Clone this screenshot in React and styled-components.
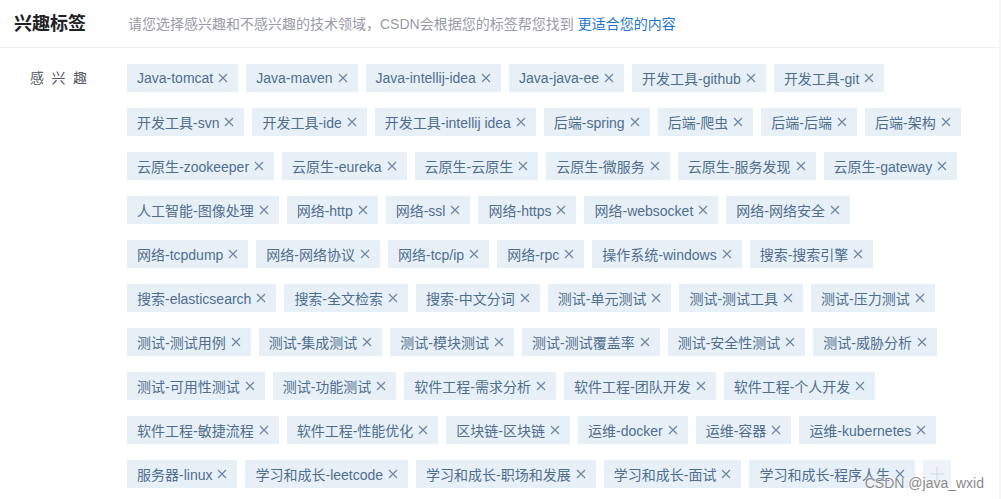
import React from "react";
import styled, { createGlobalStyle } from "styled-components";

const rows = [
  ["Java-tomcat", "Java-maven", "Java-intellij-idea", "Java-java-ee", "开发工具-github", "开发工具-git"],
  ["开发工具-svn", "开发工具-ide", "开发工具-intellij idea", "后端-spring", "后端-爬虫", "后端-后端", "后端-架构"],
  ["云原生-zookeeper", "云原生-eureka", "云原生-云原生", "云原生-微服务", "云原生-服务发现", "云原生-gateway"],
  ["人工智能-图像处理", "网络-http", "网络-ssl", "网络-https", "网络-websocket", "网络-网络安全"],
  ["网络-tcpdump", "网络-网络协议", "网络-tcp/ip", "网络-rpc", "操作系统-windows", "搜索-搜索引擎"],
  ["搜索-elasticsearch", "搜索-全文检索", "搜索-中文分词", "测试-单元测试", "测试-测试工具", "测试-压力测试"],
  ["测试-测试用例", "测试-集成测试", "测试-模块测试", "测试-测试覆盖率", "测试-安全性测试", "测试-威胁分析"],
  ["测试-可用性测试", "测试-功能测试", "软件工程-需求分析", "软件工程-团队开发", "软件工程-个人开发"],
  ["软件工程-敏捷流程", "软件工程-性能优化", "区块链-区块链", "运维-docker", "运维-容器", "运维-kubernetes"],
  ["服务器-linux", "学习和成长-leetcode", "学习和成长-职场和发展", "学习和成长-面试", "学习和成长-程序人生"],
];

const GlobalStyle = createGlobalStyle`
  html, body {
    margin: 0;
    padding: 0;
    background: #f5f6f7;
    font-family: "Liberation Sans", "Noto Sans CJK SC", sans-serif;
  }
`;

const Card = styled.div`
  width: 999px;
  height: 499px;
  background: #fff;
  overflow: hidden;
  position: relative;
`;

const Header = styled.div`
  display: flex;
  align-items: center;
  border-bottom: 1px solid #eeeeee;
  padding-left: 14px;
  box-sizing: border-box;
  height: 48px;
`;

const Title = styled.h3`
  margin: 0;
  width: 114px;
  font-size: 18px;
  font-weight: bold;
  color: #222226;
  line-height: 24px;
`;

const Desc = styled.p`
  margin: 0;
  font-size: 14px;
  color: #999aaa;
  line-height: 20px;
`;

const Link = styled.a`
  color: #1f76d0;
  text-decoration: none;
  margin-left: 4px;
`;

const Body = styled.div`
  display: flex;
  padding-top: 16px;
`;

const Label = styled.div`
  width: 127px;
  padding-left: 30px;
  box-sizing: border-box;
  font-size: 14px;
  line-height: 28px;
  color: #555666;
  letter-spacing: 7.5px;
  flex-shrink: 0;
`;

const Tags = styled.div`
  display: flex;
  flex-direction: column;
  gap: 16px;
`;

const Row = styled.div`
  display: flex;
  gap: 8px;
`;

const Tag = styled.span`
  display: inline-flex;
  align-items: center;
  height: 28px;
  padding: 0 10px;
  background: #e8f0f7;
  color: #4e6e8e;
  font-size: 14px;
  white-space: nowrap;
`;

const Close = styled.svg`
  margin-left: 5px;
  width: 10px;
  height: 10px;
`;

const AddButton = styled.span`
  width: 28px;
  height: 28px;
  background: #eef3f8;
  display: flex;
  align-items: center;
  justify-content: center;
`;

const Watermark = styled.div`
  position: absolute;
  right: 15px;
  bottom: 8px;
  font-size: 14px;
  color: #8a8a8a;
  text-shadow: 0 0 2px #fff, 0 0 1px #fff;
  font-family: "Liberation Sans", sans-serif;
`;

function CloseIcon() {
  return (
    <Close viewBox="0 0 10 10">
      <path d="M1 1L9 9M9 1L1 9" stroke="#6b87a3" strokeWidth="1.2" />
    </Close>
  );
}

export default function App() {
  return (
    <>
      <GlobalStyle />
      <Card>
        <Header>
          <Title>兴趣标签</Title>
          <Desc>
            请您选择感兴趣和不感兴趣的技术领域，CSDN会根据您的标签帮您找到
            <Link>更适合您的内容</Link>
          </Desc>
        </Header>
        <Body>
          <Label>感兴趣</Label>
          <Tags>
            {rows.map((row, i) => (
              <Row key={i}>
                {row.map((t) => (
                  <Tag key={t}>
                    {t}
                    <CloseIcon />
                  </Tag>
                ))}
                {i === rows.length - 1 && (
                  <AddButton>
                    <svg width="14" height="14" viewBox="0 0 14 14">
                      <path d="M7 0V14M0 7H14" stroke="#d2dbe4" strokeWidth="1.2" />
                    </svg>
                  </AddButton>
                )}
              </Row>
            ))}
          </Tags>
        </Body>
        <Watermark>CSDN @java_wxid</Watermark>
      </Card>
    </>
  );
}
